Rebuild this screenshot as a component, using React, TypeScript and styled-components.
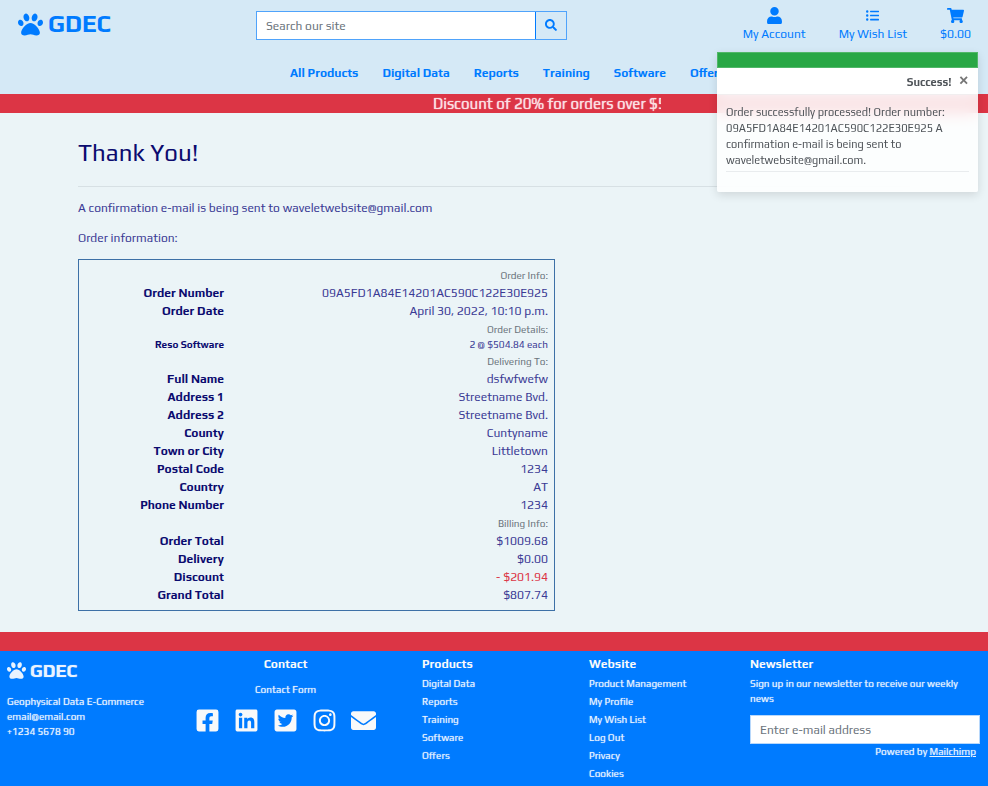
import React from 'react';
import styled, { createGlobalStyle } from 'styled-components';
import {
  FaPaw, FaSearch, FaUser, FaListUl, FaShoppingCart, FaFacebookSquare,
  FaLinkedin, FaTwitterSquare, FaInstagram, FaEnvelope,
} from 'react-icons/fa';

const blue = '#007bff';
const red = '#dc3545';
const navy = '#0b0b6f';

const GlobalStyle = createGlobalStyle`
  *, *::before, *::after { box-sizing: border-box; }
  body {
    margin: 0;
    background: #ebf4f7;
    color: #3b3b95;
    font-family: Play, Inter, "Noto Sans", sans-serif;
    font-size: 12px;
    line-height: 18px;
  }
  h1, h2, p, ul, dl, dd { margin: 0; padding: 0; }
  ul { list-style: none; }
  a { color: inherit; text-decoration: none; }
  button, input { font: inherit; }
`;

const Page = styled.div`
  display: flex;
  flex-direction: column;
  min-height: 100vh;
`;

const Header = styled.header`
  background: #d5e9f6;
  color: ${blue};
`;

const TopRow = styled.div`
  display: grid;
  grid-template-columns: minmax(0, 238fr) 311px minmax(0, 404fr);
  padding: 0 17px 0 18px;
  height: 52px;
`;

const Brand = styled.a<{ $small?: boolean }>`
  display: flex;
  align-items: center;
  gap: ${p => (p.$small ? '4px' : '5px')};
  height: ${p => (p.$small ? '30px' : '48px')};
  margin-bottom: ${p => (p.$small ? '9px' : '0')};
  font-size: ${p => (p.$small ? '18px' : '24px')};
  font-weight: 700;
  svg { font-size: ${p => (p.$small ? '19px' : '25px')}; }
`;

const SearchForm = styled.form`
  display: flex;
  height: 29px;
  margin-top: 11px;
  border: 1px solid #4fa3fb;
`;

const SearchInput = styled.input`
  flex: 1;
  min-width: 0;
  border: 0;
  padding: 0 9px;
  color: #495057;
  &::placeholder { color: #6c757d; opacity: 1; }
`;

const SearchButton = styled.button`
  width: 31px;
  padding: 0 0 2px;
  border: 0;
  border-left: 1px solid ${blue};
  background: transparent;
  color: ${blue};
  line-height: 1;
  svg { display: block; margin: 0 auto; }
`;

const UserLinks = styled.nav`
  display: flex;
  justify-content: flex-end;
  gap: 33px;
  padding-top: 6px;
`;

const UserLink = styled.a`
  display: flex;
  flex-direction: column;
  align-items: center;
  white-space: nowrap;
`;

const IconSlot = styled.span<{ $size: number }>`
  display: flex;
  align-items: center;
  height: 19px;
  font-size: ${p => p.$size}px;
`;

const MainNav = styled.nav`
  display: flex;
  justify-content: center;
  gap: 24px;
  padding: 12px 0 12px 27px;
  font-weight: 700;
`;

const Promo = styled.div`
  height: 19px;
  padding-left: 106px;
  background: ${red};
  color: #fbdfe2;
`;

const PromoText = styled.p`
  width: 228px;
  margin: 0 auto;
  overflow: hidden;
  white-space: nowrap;
  font-size: 15px;
  line-height: 19px;
  text-shadow: 0 0 1px currentColor;
`;

const Main = styled.main`
  flex: 1;
  padding: 23px 78px 21px;
`;

const Title = styled.h1`
  color: ${navy};
  font-size: 24px;
  font-weight: 400;
  line-height: 34px;
  padding-bottom: 16px;
  border-bottom: 1px solid #d7e0e4;
  margin-bottom: 12px;
`;

const Paragraph = styled.p`
  margin-bottom: 12px;
`;

const OrderBox = styled.section`
  max-width: 477px;
  padding: 6px;
  border: 1px solid #3d70a6;
`;

const Caption = styled.h2`
  padding-top: 2px;
  color: #6c757d;
  font-size: 10px;
  font-weight: 400;
  line-height: 16px;
  text-align: right;
`;

const Rows = styled.dl`
  display: grid;
  grid-template-columns: 139px 1fr;
`;

const Term = styled.dt<{ $small?: boolean }>`
  color: ${navy};
  font-weight: 700;
  text-align: right;
  font-size: ${p => (p.$small ? '10px' : '12px')};
  line-height: ${p => (p.$small ? '14px' : '18px')};
`;

const Value = styled.dd<{ $small?: boolean; $discount?: boolean }>`
  text-align: right;
  color: ${p => (p.$discount ? red : 'inherit')};
  font-size: ${p => (p.$small ? '10px' : '12px')};
  line-height: ${p => (p.$small ? '14px' : '18px')};
`;

const Toast = styled.aside`
  position: fixed;
  top: 52px;
  right: 10px;
  width: 261px;
  padding-bottom: 20px;
  background: rgba(255, 255, 255, 0.85);
  backdrop-filter: blur(8px);
  box-shadow: 0 3px 10px rgba(0, 0, 0, 0.12);
  border-radius: 2px;
  color: #4f5459;
  font-size: 11px;
`;

const ToastBar = styled.div`
  height: 16px;
  background: #28a745;
  border: 1px solid #50b768;
`;

const ToastHead = styled.div`
  display: flex;
  justify-content: flex-end;
  gap: 7px;
  height: 27px;
  padding: 0 9px;
  background: #fff;
  border-bottom: 1px solid #f1eeef;
`;

const ToastTitle = styled.strong`
  line-height: 28px;
`;

const CloseButton = styled.button`
  height: 24px;
  padding: 0;
  border: 0;
  background: none;
  color: #777;
  font-size: 18px;
  font-weight: 700;
  line-height: 24px;
`;

const ToastBody = styled.p`
  margin: 0 9px;
  padding: 9px 0 3px;
  line-height: 16px;
  border-bottom: 1px solid #e9ecee;
`;

const FooterBand = styled.div`
  height: 19px;
  background: ${red};
`;

const Footer = styled.footer`
  display: grid;
  grid-template-columns: 171fr 244fr 167fr 161fr 230fr;
  min-height: 135px;
  padding: 4px 8px 4px 7px;
  background: ${blue};
  color: #e9f3ff;
  font-size: 10px;
  line-height: 15px;
  text-shadow: 0 0 1px rgba(233, 243, 255, 0.7);
`;

const FooterHeading = styled.h2`
  color: #f8f9fa;
  font-size: 12px;
  font-weight: 700;
  line-height: 18px;
  margin-bottom: 2px;
  text-shadow: none;
`;

const FooterColumn = styled.div`
  min-width: 0;
`;

const ContactColumn = styled(FooterColumn)`
  display: flex;
  flex-direction: column;
  align-items: center;
  padding-right: 29px;
`;

const LinkList = styled.ul`
  line-height: 18px;
`;

const ContactLink = styled.a`
  margin-top: 7px;
`;

const Socials = styled.div`
  display: flex;
  align-items: center;
  gap: 14px;
  margin-top: 11px;
  color: #f8f9fa;
  font-size: 25px;
  svg { display: block; }
`;

const Note = styled.p`
  padding-top: 1px;
`;

const Email = styled.input`
  display: block;
  width: 100%;
  height: 29px;
  margin: 9px 0 0;
  padding: 0 9px;
  border: 1px solid #b8d8fb;
  font-size: 12px;
  &::placeholder { color: #6c757d; opacity: 1; }
`;

const Powered = styled.p`
  padding-right: 4px;
  text-align: right;
  a { text-decoration: underline; }
`;

type Row = { label: string; value: string; small?: boolean; discount?: boolean };

const groups: { caption: string; rows: Row[] }[] = [
  {
    caption: 'Order Info:',
    rows: [
      { label: 'Order Number', value: '09A5FD1A84E14201AC590C122E30E925' },
      { label: 'Order Date', value: 'April 30, 2022, 10:10 p.m.' },
    ],
  },
  { caption: 'Order Details:', rows: [{ label: 'Reso Software', value: '2 @ $504.84 each', small: true }] },
  {
    caption: 'Delivering To:',
    rows: [
      { label: 'Full Name', value: 'dsfwfwefw' },
      { label: 'Address 1', value: 'Streetname Bvd.' },
      { label: 'Address 2', value: 'Streetname Bvd.' },
      { label: 'County', value: 'Cuntyname' },
      { label: 'Town or City', value: 'Littletown' },
      { label: 'Postal Code', value: '1234' },
      { label: 'Country', value: 'AT' },
      { label: 'Phone Number', value: '1234' },
    ],
  },
  {
    caption: 'Billing Info:',
    rows: [
      { label: 'Order Total', value: '$1009.68' },
      { label: 'Delivery', value: '$0.00' },
      { label: 'Discount', value: '- $201.94', discount: true },
      { label: 'Grand Total', value: '$807.74' },
    ],
  },
];

const navItems = ['All Products', 'Digital Data', 'Reports', 'Training', 'Software', 'Offers'];
const productLinks = ['Digital Data', 'Reports', 'Training', 'Software', 'Offers'];
const siteLinks = ['Product Management', 'My Profile', 'My Wish List', 'Log Out', 'Privacy', 'Cookies'];

const FooterLinks = ({ title, items }: { title: string; items: string[] }) => (
  <FooterColumn>
    <FooterHeading>{title}</FooterHeading>
    <LinkList>
      {items.map(item => <li key={item}><a href="#">{item}</a></li>)}
    </LinkList>
  </FooterColumn>
);

export default function App() {
  return (
    <Page>
      <GlobalStyle />
      <Header>
        <TopRow>
          <Brand href="#"><FaPaw />GDEC</Brand>
          <SearchForm>
            <SearchInput type="text" placeholder="Search our site" aria-label="Search our site" />
            <SearchButton type="button" aria-label="Search"><FaSearch /></SearchButton>
          </SearchForm>
          <UserLinks>
            <UserLink href="#"><IconSlot $size={17}><FaUser /></IconSlot>My Account</UserLink>
            <UserLink href="#"><IconSlot $size={13}><FaListUl /></IconSlot>My Wish List</UserLink>
            <UserLink href="#"><IconSlot $size={17}><FaShoppingCart /></IconSlot>$0.00</UserLink>
          </UserLinks>
        </TopRow>
        <MainNav>
          {navItems.map(item => <a key={item} href="#">{item}</a>)}
        </MainNav>
      </Header>
      <Promo>
        <PromoText>Discount of 20% for orders over $50</PromoText>
      </Promo>
      <Main>
        <Title>Thank You!</Title>
        <Paragraph>A confirmation e-mail is being sent to waveletwebsite@gmail.com</Paragraph>
        <Paragraph>Order information:</Paragraph>
        <OrderBox>
          {groups.map(group => (
            <React.Fragment key={group.caption}>
              <Caption>{group.caption}</Caption>
              <Rows>
                {group.rows.map(row => (
                  <React.Fragment key={row.label}>
                    <Term $small={row.small}>{row.label}</Term>
                    <Value $small={row.small} $discount={row.discount}>{row.value}</Value>
                  </React.Fragment>
                ))}
              </Rows>
            </React.Fragment>
          ))}
        </OrderBox>
      </Main>
      <FooterBand />
      <Footer>
        <FooterColumn>
          <Brand href="#" $small><FaPaw />GDEC</Brand>
          <p>Geophysical Data E-Commerce</p>
          <p>email@email.com</p>
          <p>+1234 5678 90</p>
        </FooterColumn>
        <ContactColumn>
          <FooterHeading>Contact</FooterHeading>
          <ContactLink href="#">Contact Form</ContactLink>
          <Socials>
            <a href="#" aria-label="Facebook"><FaFacebookSquare /></a>
            <a href="#" aria-label="LinkedIn"><FaLinkedin /></a>
            <a href="#" aria-label="Twitter"><FaTwitterSquare /></a>
            <a href="#" aria-label="Instagram"><FaInstagram /></a>
            <a href="#" aria-label="E-mail"><FaEnvelope /></a>
          </Socials>
        </ContactColumn>
        <FooterLinks title="Products" items={productLinks} />
        <FooterLinks title="Website" items={siteLinks} />
        <FooterColumn>
          <FooterHeading>Newsletter</FooterHeading>
          <Note>Sign up in our newsletter to receive our weekly news</Note>
          <Email type="email" placeholder="Enter e-mail address" aria-label="E-mail address" />
          <Powered>Powered by <a href="#">Mailchimp</a></Powered>
        </FooterColumn>
      </Footer>
      <Toast role="status">
        <ToastBar />
        <ToastHead>
          <ToastTitle>Success!</ToastTitle>
          <CloseButton type="button" aria-label="Close">×</CloseButton>
        </ToastHead>
        <ToastBody>
          Order successfully processed! Order number: 09A5FD1A84E14201AC590C122E30E925 A
          confirmation e-mail is being sent to waveletwebsite@gmail.com.
        </ToastBody>
      </Toast>
    </Page>
  );
}
